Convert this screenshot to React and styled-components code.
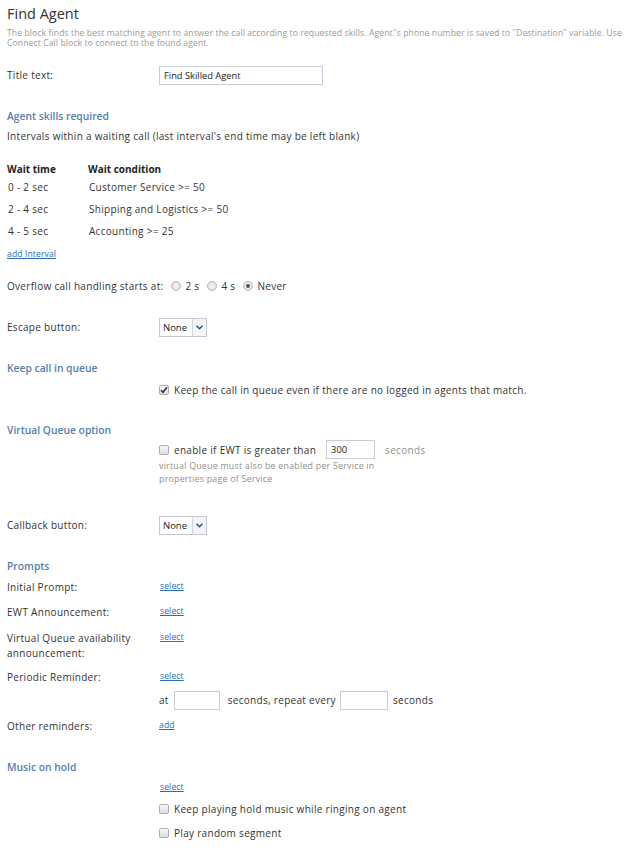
import React from 'react';
import styled, { createGlobalStyle } from 'styled-components';

const GlobalStyle = createGlobalStyle`
  html, body {
    margin: 0;
    padding: 0;
    background: #ffffff;
  }
  body {
    font-family: 'Open Sans', 'DejaVu Sans', sans-serif;
    font-size: 10px;
    letter-spacing: 0.3px;
    color: #333333;
  }
`;

const Page = styled.div`
  width: 642px;
  padding: 0 7px;
  box-sizing: border-box;
`;

const Title = styled.h1`
  margin: 0;
  height: 28px;
  line-height: 28px;
  font-size: 14.5px;
  font-weight: 400;
  letter-spacing: 0;
  color: #333;
`;

const Description = styled.p`
  margin: 0;
  font-size: 8.6px;
  letter-spacing: 0.1px;
  line-height: 10px;
  color: #9a9a9a;
`;

const Row = styled.div`
  display: flex;
  align-items: ${p => (p.$top ? 'flex-start' : 'center')};
  height: ${p => (p.$h ? `${p.$h}px` : 'auto')};
  margin-top: ${p => p.$mt || 0}px;
`;

const Label = styled.div`
  width: 152px;
  flex: none;
  line-height: 15px;
  color: #333;
`;

const Value = styled.div`
  display: flex;
  align-items: center;
`;

const SectionTitle = styled.h2`
  margin: 0;
  margin-top: ${p => p.$mt || 0}px;
  height: ${p => p.$h || 20}px;
  line-height: ${p => p.$h || 20}px;
  font-size: 10.3px;
  font-weight: 600;
  letter-spacing: 0;
  color: #5480ad;
`;

const Text = styled.div`
  margin-top: ${p => p.$mt || 0}px;
  height: ${p => p.$h || 20}px;
  line-height: ${p => p.$h || 20}px;
`;

const TextInput = styled.input`
  box-sizing: border-box;
  width: ${p => p.$w}px;
  height: 19px;
  border: 1px solid #c9cbd8;
  padding: 0 4px;
  margin: 0 ${p => p.$mr || 0}px 0 ${p => p.$ml || 0}px;
  font-family: 'Open Sans', 'DejaVu Sans', sans-serif;
  font-size: 9.3px;
  color: #222;
  outline: none;
`;

const Table = styled.div`
  display: grid;
  grid-template-columns: 81px 1fr;
  margin-top: 16px;
`;

const HeadCell = styled.div`
  height: 14px;
  line-height: 14px;
  font-weight: 700;
  letter-spacing: 0;
  color: #222;
`;

const Cell = styled.div`
  height: 22px;
  line-height: 22px;
  padding-left: 1px;
  color: #333;
`;

const Link = styled.a`
  color: #2a6db3;
  text-decoration: underline;
  font-size: 8.6px;
  letter-spacing: 0.1px;
  cursor: pointer;
  margin-left: ${p => p.$ml || 0}px;
`;

const Radio = styled.span`
  display: inline-block;
  box-sizing: border-box;
  width: 10px;
  height: 10px;
  border-radius: 50%;
  border: 1px solid #b4b4b4;
  background: radial-gradient(circle, #f4f4f4 0%, #e0e0e0 100%);
  margin: 0 4px 0 8px;
  position: relative;
  &::after {
    content: '';
    display: ${p => (p.$checked ? 'block' : 'none')};
    position: absolute;
    left: 2px;
    top: 2px;
    width: 4px;
    height: 4px;
    border-radius: 50%;
    background: #555;
  }
`;

const Box = styled.span`
  display: inline-flex;
  align-items: center;
  justify-content: center;
  box-sizing: border-box;
  width: 10px;
  height: 10px;
  border: 1px solid #aeaeae;
  border-radius: 2px;
  background: linear-gradient(#f7f7f7, #dedede);
  margin-right: 5px;
  flex: none;
`;

const Select = styled.div`
  display: inline-flex;
  box-sizing: border-box;
  height: 19px;
  border: 1px solid #c4c7d6;
  font-size: 9.5px;
  letter-spacing: 0;
  color: #222;
`;

const SelectText = styled.span`
  padding: 0 3px;
  width: 26px;
  line-height: 17px;
`;

const SelectArrow = styled.span`
  width: 13px;
  border-left: 1px solid #d4d6e0;
  background: #f4f4f6;
  display: flex;
  align-items: center;
  justify-content: center;
`;

const Muted = styled.span`
  color: #8f8f8f;
`;

const Note = styled.div`
  padding-left: 152px;
  font-size: 8.8px;
  letter-spacing: 0.25px;
  line-height: 13px;
  color: #8f8f8f;
  width: 232px;
`;

const Checkbox = ({ checked }) => (
  <Box>
    {checked && (
      <svg width="8" height="8" viewBox="0 0 8 8">
        <path d="M1 4.2 L3 6.3 L7 1.2" fill="none" stroke="#333" strokeWidth="1.6" />
      </svg>
    )}
  </Box>
);

const Dropdown = ({ value }) => (
  <Select>
    <SelectText>{value}</SelectText>
    <SelectArrow>
      <svg width="7" height="5" viewBox="0 0 7 5">
        <path d="M0.5 0.8 L3.5 3.8 L6.5 0.8" fill="none" stroke="#2e4f86" strokeWidth="1.5" />
      </svg>
    </SelectArrow>
  </Select>
);

const intervals = [
  ['0 - 2 sec', 'Customer Service >= 50'],
  ['2 - 4 sec', 'Shipping and Logistics >= 50'],
  ['4 - 5 sec', 'Accounting >= 25'],
];

export default function App() {
  return (
    <Page>
      <GlobalStyle />
      <Title>Find Agent</Title>
      <Description>
        The block finds the best matching agent to answer the call according to requested skills. Agent''s phone number is saved to "Destination" variable. Use Connect Call block to connect to the found agent.
      </Description>

      <Row $h={22} $mt={16}>
        <Label>Title text:</Label>
        <TextInput $w={164} defaultValue="Find Skilled Agent" />
      </Row>

      <SectionTitle $mt={20}>Agent skills required</SectionTitle>
      <Text>Intervals within a waiting call (last interval's end time may be left blank)</Text>

      <Table>
        <HeadCell>Wait time</HeadCell>
        <HeadCell>Wait condition</HeadCell>
        {intervals.map(([time, cond]) => (
          <React.Fragment key={time}>
            <Cell>{time}</Cell>
            <Cell>{cond}</Cell>
          </React.Fragment>
        ))}
      </Table>

      <Text $h={22}><Link>add Interval</Link></Text>

      <Row $h={22} $mt={11}>
        <Value>
          Overflow call handling starts at:
          <Radio />2 s
          <Radio />4 s
          <Radio $checked />Never
        </Value>
      </Row>

      <Row $h={22} $mt={19}>
        <Label>Escape button:</Label>
        <Dropdown value="None" />
      </Row>

      <SectionTitle $mt={20}>Keep call in queue</SectionTitle>
      <Row $h={20} $mt={2}>
        <Label />
        <Value>
          <Checkbox checked />
          Keep the call in queue even if there are no logged in agents that match.
        </Value>
      </Row>

      <SectionTitle $mt={21} $h={18}>Virtual Queue option</SectionTitle>
      <Row $h={21}>
        <Label />
        <Value>
          <Checkbox />
          enable if EWT is greater than
          <TextInput $w={49} $ml={10} $mr={10} defaultValue="300" />
          <Muted>seconds</Muted>
        </Value>
      </Row>
      <Note>virtual Queue must also be enabled per Service in properties page of Service</Note>

      <Row $h={22} $mt={28}>
        <Label>Callback button:</Label>
        <Dropdown value="None" />
      </Row>

      <SectionTitle $mt={20}>Prompts</SectionTitle>
      <Row $top $mt={4}>
        <Label>Initial Prompt:</Label>
        <Link $ml={1}>select</Link>
      </Row>
      <Row $top $mt={10}>
        <Label>EWT Announcement:</Label>
        <Link $ml={1}>select</Link>
      </Row>
      <Row $top $mt={11}>
        <Label>Virtual Queue availability<br />announcement:</Label>
        <Link $ml={1}>select</Link>
      </Row>
      <Row $top $mt={9}>
        <Label>Periodic Reminder:</Label>
        <Link $ml={1}>select</Link>
      </Row>
      <Row $h={22} $mt={4}>
        <Label />
        <Value>
          at
          <TextInput $w={46} $ml={5} $mr={8} />
          seconds, repeat every
          <TextInput $w={48} $ml={4} $mr={5} />
          seconds
        </Value>
      </Row>
      <Row $top $mt={8}>
        <Label>Other reminders:</Label>
        <Link>add</Link>
      </Row>

      <SectionTitle $mt={23}>Music on hold</SectionTitle>
      <Row $top $mt={4}>
        <Label />
        <Link $ml={1}>select</Link>
      </Row>
      <Row $h={20} $mt={6}>
        <Label />
        <Value><Checkbox />Keep playing hold music while ringing on agent</Value>
      </Row>
      <Row $h={20} $mt={4}>
        <Label />
        <Value><Checkbox />Play random segment</Value>
      </Row>
    </Page>
  );
}
